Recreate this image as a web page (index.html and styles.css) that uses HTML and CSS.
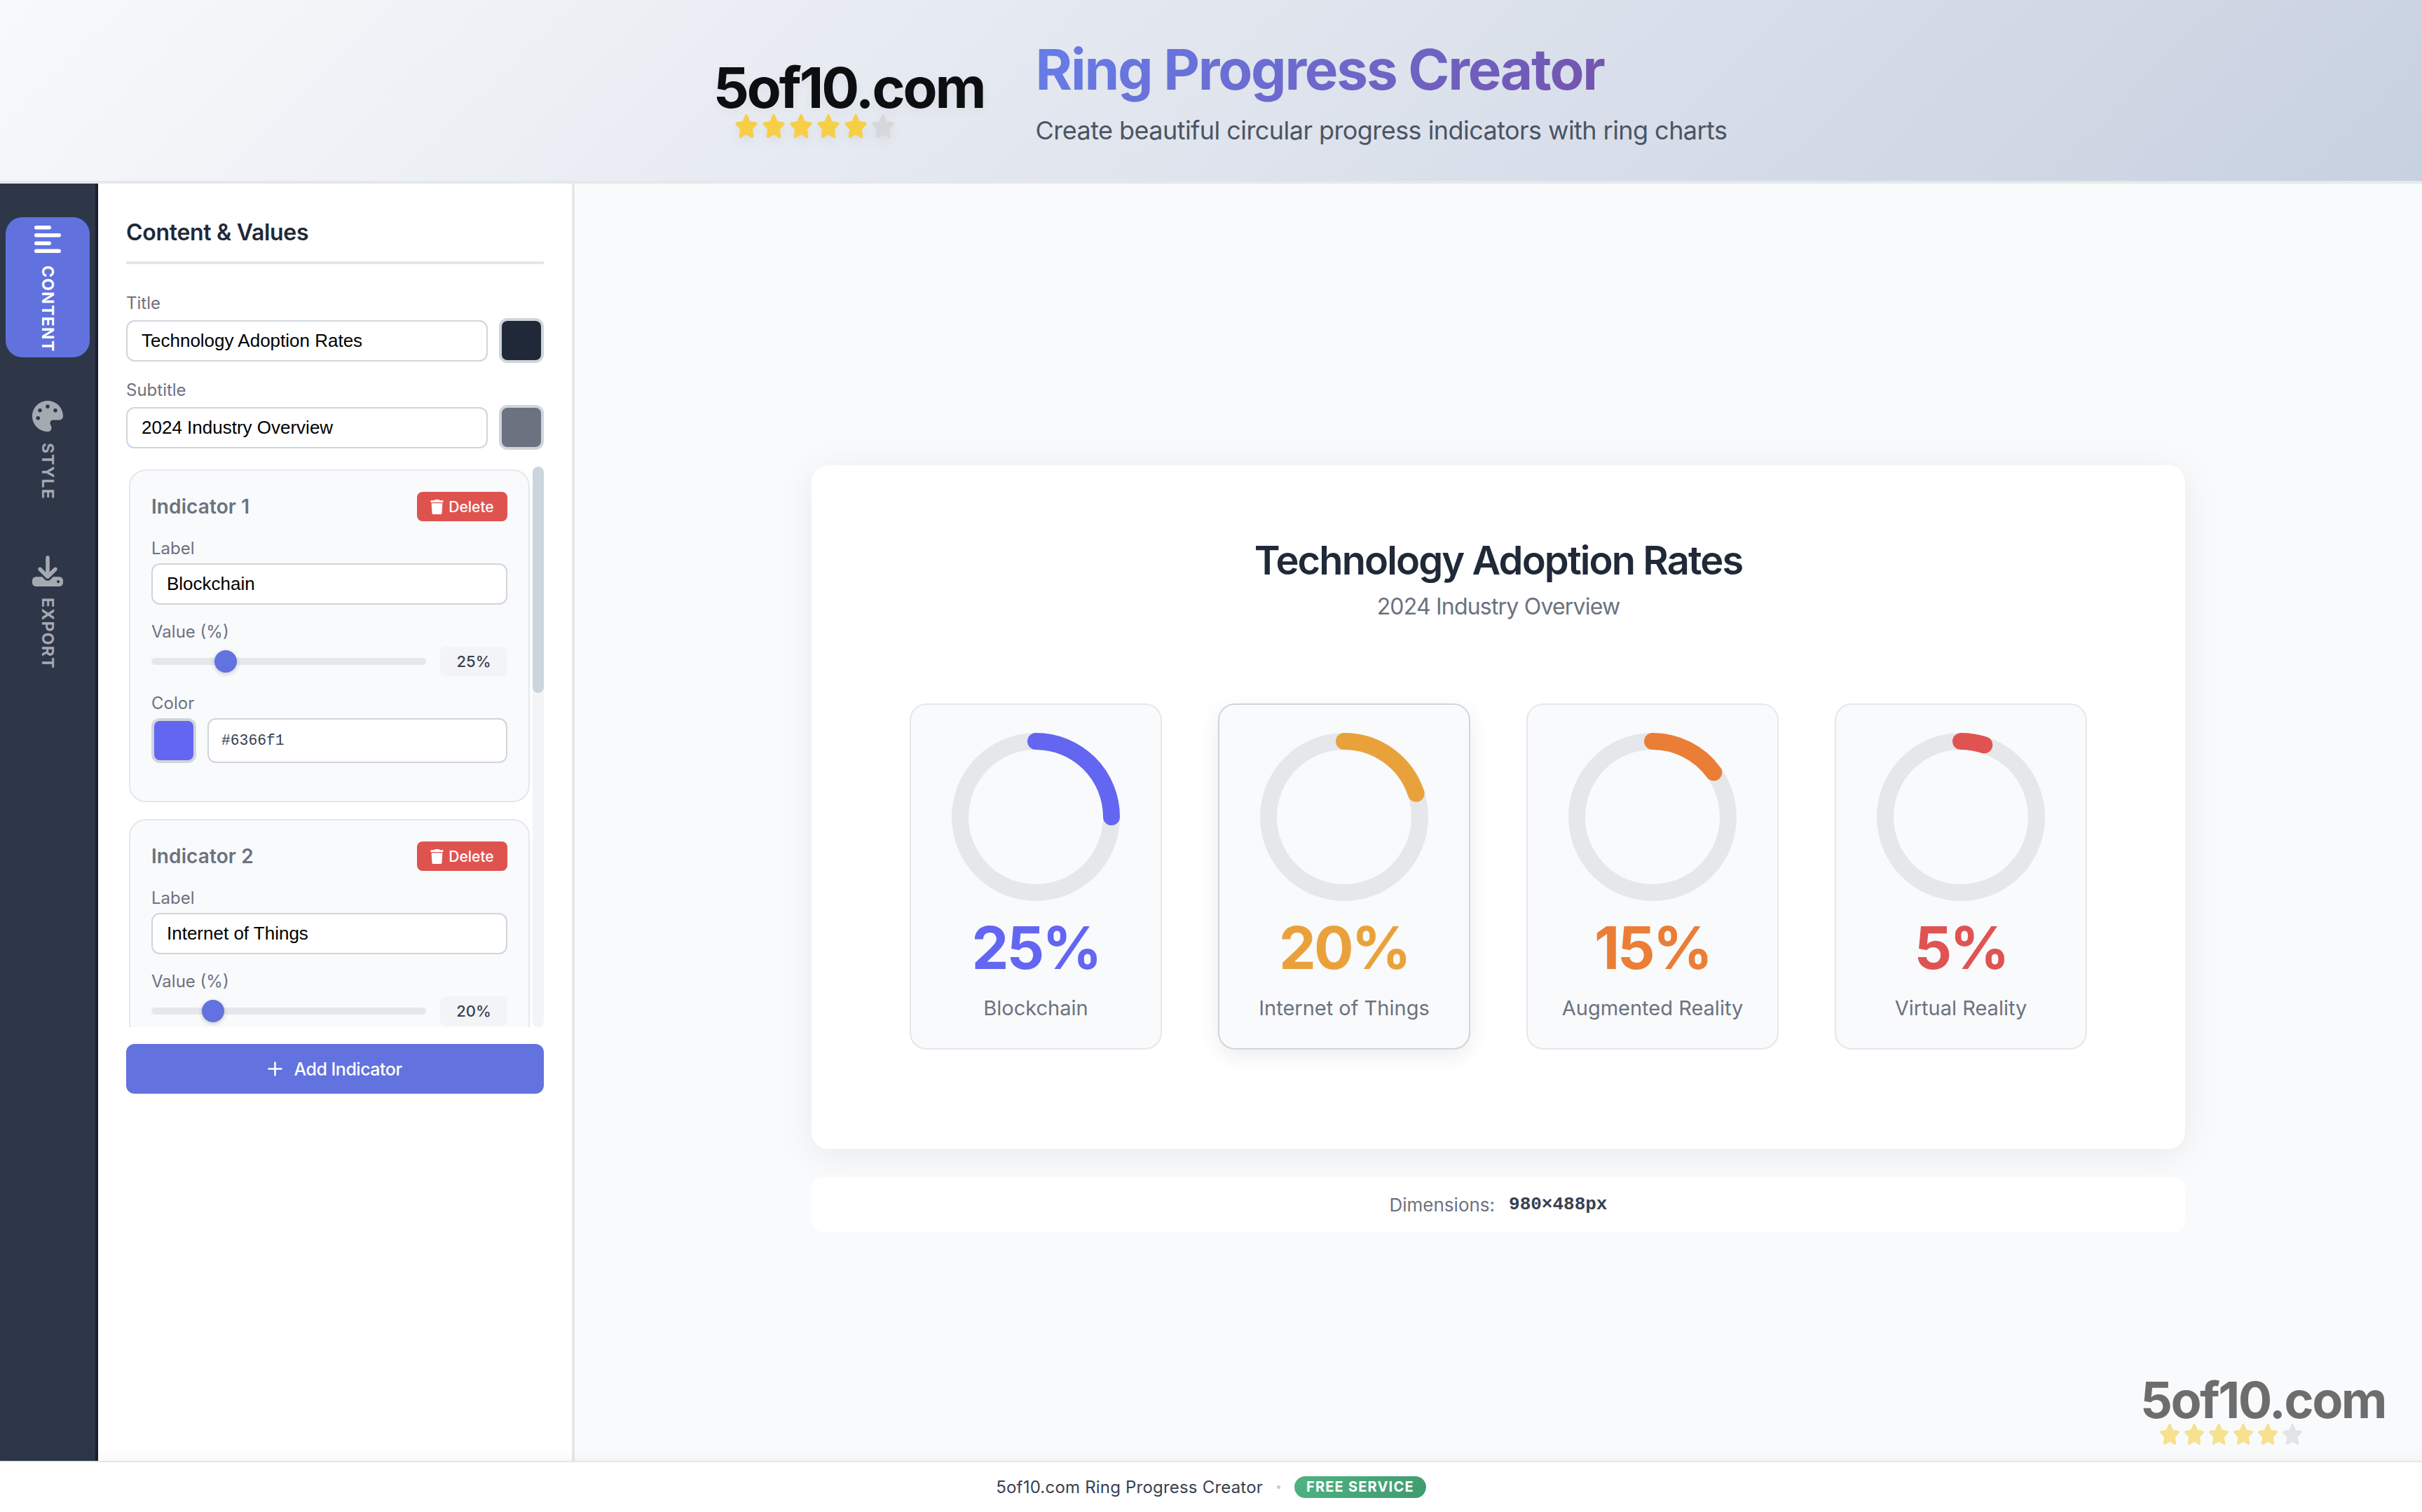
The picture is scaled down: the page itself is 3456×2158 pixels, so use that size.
FILE: index.html
```html
<!DOCTYPE html>
<html lang="en">
<head>
    <meta charset="UTF-8">
    <meta name="viewport" content="width=device-width, initial-scale=1.0">
    <title>Ring Progress Creator</title>
    <link rel="stylesheet" href="styles.css">
</head>
<body>
    <svg class="defs" width="0" height="0">
        <symbol id="star" viewBox="0 0 576 512" preserveAspectRatio="none"><path d="M316.9 18C311.6 7 300.4 0 288.1 0s-23.4 7-28.8 18L195 150.3 51.4 171.5c-12 1.8-22 10.2-25.7 21.7s-.7 24.2 7.9 32.7L137.8 329 113.2 474.7c-2 12 3 24.2 12.9 31.3s23 8 33.8 2.3l128.3-68.5 128.3 68.5c10.8 5.7 23.9 4.9 33.8-2.3s14.9-19.3 12.9-31.3L438.5 329 542.7 225.9c8.6-8.5 11.7-21.2 7.9-32.7s-13.7-19.9-25.7-21.7L381.2 150.3 316.9 18z"/></symbol>
        <symbol id="trash" viewBox="0 0 448 512"><path d="M135.2 17.7L128 32H32C14.3 32 0 46.3 0 64S14.3 96 32 96H416c17.7 0 32-14.3 32-32s-14.3-32-32-32H320l-7.2-14.3C307.4 6.8 296.3 0 284.2 0H163.8c-12.1 0-23.2 6.8-28.6 17.7zM416 128H32L53.2 467c1.6 25.3 22.6 45 47.9 45H346.9c25.3 0 46.3-19.7 47.9-45L416 128z"/></symbol>
    </svg>

    <header class="top-header">
        <div class="logo">
            <div class="logo-text">5of10.com</div>
            <div class="stars">
                <svg class="star"><use href="#star"/></svg>
                <svg class="star"><use href="#star"/></svg>
                <svg class="star"><use href="#star"/></svg>
                <svg class="star"><use href="#star"/></svg>
                <svg class="star"><use href="#star"/></svg>
                <svg class="star star-off"><use href="#star"/></svg>
            </div>
        </div>
        <div class="header-text">
            <h1>Ring Progress Creator</h1>
            <p>Create beautiful circular progress indicators with ring charts</p>
        </div>
    </header>

    <main class="app">
        <!-- Tabs -->
        <nav class="tabs">
            <a class="tab active" href="#">
                <svg class="tab-icon" viewBox="0 0 38 39" width="38" height="39" fill="#fff">
                    <rect x="0" y="0" width="24" height="5.4" rx="2.7"/>
                    <rect x="0" y="11" width="38" height="5.4" rx="2.7"/>
                    <rect x="0" y="22.5" width="24" height="5.4" rx="2.7"/>
                    <rect x="0" y="33.6" width="38" height="5.4" rx="2.7"/>
                </svg>
                <span>CONTENT</span>
            </a>
            <a class="tab" href="#">
                <svg class="tab-icon" viewBox="0 0 512 512" width="44" height="44" fill="currentColor"><path d="M512 256c0 .9 0 1.8 0 2.7c-.4 36.5-33.6 61.3-70.1 61.3H344c-26.5 0-48 21.5-48 48c0 3.4 .4 6.7 1 9.9c2.1 10.2 6.5 20 10.8 29.9c6.1 13.8 12.1 27.5 12.1 42c0 31.8-21.6 60.7-53.4 62c-3.5 .1-7 .2-10.6 .2C114.6 512 0 397.4 0 256S114.6 0 256 0S512 114.6 512 256zM128 288a32 32 0 1 0 -64 0 32 32 0 1 0 64 0zm0-96a32 32 0 1 0 0-64 32 32 0 1 0 0 64zM288 96a32 32 0 1 0 -64 0 32 32 0 1 0 64 0zm96 96a32 32 0 1 0 0-64 32 32 0 1 0 0 64z"/></svg>
                <span>STYLE</span>
            </a>
            <a class="tab" href="#">
                <svg class="tab-icon" viewBox="0 0 512 512" width="44" height="44" fill="currentColor"><path d="M288 32c0-17.7-14.3-32-32-32s-32 14.3-32 32V274.7l-73.4-73.4c-12.5-12.5-32.8-12.5-45.3 0s-12.5 32.8 0 45.3l128 128c12.5 12.5 32.8 12.5 45.3 0l128-128c12.5-12.5 12.5-32.8 0-45.3s-32.8-12.5-45.3 0L288 274.7V32zM64 352c-35.3 0-64 28.7-64 64v32c0 35.3 28.7 64 64 64H448c35.3 0 64-28.7 64-64V416c0-35.3-28.7-64-64-64H346.5l-45.3 45.3c-25 25-65.5 25-90.5 0L165.5 352H64zm368 56a24 24 0 1 1 0 48 24 24 0 1 1 0-48z"/></svg>
                <span>EXPORT</span>
            </a>
        </nav>

        <!-- Panel -->
        <section class="panel">
            <h2>Content &amp; Values</h2>

            <div class="field">
                <label class="field-label">Title</label>
                <div class="input-row">
                    <input class="text-input" type="text" value="Technology Adoption Rates">
                    <input class="swatch" type="color" value="#1f2937">
                </div>
            </div>
            <div class="field">
                <label class="field-label">Subtitle</label>
                <div class="input-row">
                    <input class="text-input" type="text" value="2024 Industry Overview">
                    <input class="swatch" type="color" value="#6b7280">
                </div>
            </div>

            <div class="indicator-wrap">
                <div class="indicator-list">
                    <div class="indicator">
                        <div class="indicator-head">
                            <span class="indicator-name">Indicator 1</span>
                            <button class="delete-btn"><svg class="trash"><use href="#trash"/></svg>Delete</button>
                        </div>
                        <div class="field">
                            <label class="field-label">Label</label>
                            <input class="text-input" type="text" value="Blockchain">
                        </div>
                        <div class="field">
                            <label class="field-label">Value (%)</label>
                            <div class="slider-row">
                                <input class="slider" type="range" min="0" max="100" value="25">
                                <span class="slider-value">25%</span>
                            </div>
                        </div>
                        <div class="field">
                            <label class="field-label">Color</label>
                            <div class="input-row">
                                <input class="swatch" type="color" value="#6366f1">
                                <input class="text-input hex-input" type="text" value="#6366f1">
                            </div>
                        </div>
                    </div>

                    <div class="indicator">
                        <div class="indicator-head">
                            <span class="indicator-name">Indicator 2</span>
                            <button class="delete-btn"><svg class="trash"><use href="#trash"/></svg>Delete</button>
                        </div>
                        <div class="field">
                            <label class="field-label">Label</label>
                            <input class="text-input" type="text" value="Internet of Things">
                        </div>
                        <div class="field">
                            <label class="field-label">Value (%)</label>
                            <div class="slider-row">
                                <input class="slider" type="range" min="0" max="100" value="20">
                                <span class="slider-value">20%</span>
                            </div>
                        </div>
                    </div>
                </div>
                <div class="scrollbar"><div class="scrollbar-thumb"></div></div>
            </div>

            <button class="add-btn">
                <svg viewBox="0 0 21 21" width="21" height="21" stroke="#fff" stroke-width="2.6" stroke-linecap="round"><path d="M10.5 1.5v18M1.5 10.5h18"/></svg>
                Add Indicator
            </button>
        </section>

        <!-- Preview -->
        <section class="canvas">
            <div class="chart-card">
                <h3 class="chart-title">Technology Adoption Rates</h3>
                <p class="chart-subtitle">2024 Industry Overview</p>
                <div class="rings">
                    <div class="ring-card">
                        <svg class="ring" viewBox="0 0 120 120">
                            <circle class="ring-bg" cx="60" cy="60" r="54"/>
                            <circle class="ring-bar" cx="60" cy="60" r="54" pathLength="100" stroke="#6366f1" stroke-dasharray="25 100"/>
                        </svg>
                        <div class="ring-num c-blue">25%</div>
                        <div class="ring-label">Blockchain</div>
                    </div>
                    <div class="ring-card hovered">
                        <svg class="ring" viewBox="0 0 120 120">
                            <circle class="ring-bg" cx="60" cy="60" r="54"/>
                            <circle class="ring-bar" cx="60" cy="60" r="54" pathLength="100" stroke="#e9a23b" stroke-dasharray="20 100"/>
                        </svg>
                        <div class="ring-num c-amber">20%</div>
                        <div class="ring-label">Internet of Things</div>
                    </div>
                    <div class="ring-card">
                        <svg class="ring" viewBox="0 0 120 120">
                            <circle class="ring-bg" cx="60" cy="60" r="54"/>
                            <circle class="ring-bar" cx="60" cy="60" r="54" pathLength="100" stroke="#ea7e36" stroke-dasharray="15 100"/>
                        </svg>
                        <div class="ring-num c-orange">15%</div>
                        <div class="ring-label">Augmented Reality</div>
                    </div>
                    <div class="ring-card">
                        <svg class="ring" viewBox="0 0 120 120">
                            <circle class="ring-bg" cx="60" cy="60" r="54"/>
                            <circle class="ring-bar" cx="60" cy="60" r="54" pathLength="100" stroke="#e05353" stroke-dasharray="5 100"/>
                        </svg>
                        <div class="ring-num c-red">5%</div>
                        <div class="ring-label">Virtual Reality</div>
                    </div>
                </div>
            </div>
            <div class="dimensions">
                <span>Dimensions:</span>
                <code>980×488px</code>
            </div>

            <div class="watermark">
                <div class="watermark-text">5of10.com</div>
                <div class="stars stars-small">
                    <svg class="star"><use href="#star"/></svg>
                    <svg class="star"><use href="#star"/></svg>
                    <svg class="star"><use href="#star"/></svg>
                    <svg class="star"><use href="#star"/></svg>
                    <svg class="star"><use href="#star"/></svg>
                    <svg class="star star-off"><use href="#star"/></svg>
                </div>
            </div>
        </section>
    </main>

    <footer class="bottom-bar">
        <span class="footer-name">5of10.com Ring Progress Creator</span>
        <i class="dot"></i>
        <span class="badge">FREE SERVICE</span>
    </footer>
</body>
</html>
```

FILE: styles.css
```css
* {
    box-sizing: border-box;
}
body {
    font-family: Inter, "Noto Sans", sans-serif;
    margin: 0;
    height: 100vh;
    display: flex;
    flex-direction: column;
    overflow: hidden;
    background-color: #f9fafb;
}
.defs {
    position: absolute;
}

/* Header */
.top-header {
    height: 262px;
    flex: none;
    padding-left: 26px;
    display: flex;
    justify-content: center;
    align-items: center;
    gap: 73px;
    background: linear-gradient(135deg, #f8f9fb 0%, #c8d1e1 100%);
    border-bottom: 4px solid #e5e7eb;
}
.logo {
    margin-top: 24px;
}
.logo-text {
    font-size: 80px;
    font-weight: 700;
    line-height: 80px;
    letter-spacing: -3px;
    color: #0c0e10;
    text-shadow: 0 6px 16px rgba(0, 0, 0, 0.05);
}
.stars {
    display: flex;
    gap: 5px;
    margin: -2px 0 0 30px;
    filter: drop-shadow(0 6px 8px rgba(0, 0, 0, 0.06));
}
.star {
    width: 34px;
    height: 34px;
    fill: #f6cf47;
}
.star-off {
    fill: #d6d7da;
}
.header-text {
    margin-top: -1px;
}
.header-text h1 {
    margin: 0;
    font-size: 80px;
    font-weight: 700;
    line-height: 97px;
    letter-spacing: -2.2px;
    background: linear-gradient(135deg, #667eea, #764ba2);
    -webkit-background-clip: text;
    background-clip: text;
    color: transparent;
}
.header-text p {
    margin: 17px 0 0;
    font-size: 36px;
    line-height: 44px;
    letter-spacing: -0.56px;
    color: #4b5563;
}

/* Layout */
.app {
    flex: 1;
    display: flex;
    min-height: 0;
}
.tabs {
    width: 140px;
    flex: none;
    background-color: #2d3748;
    border-right: 4px solid #1a202c;
    padding: 48px 8px 0;
    display: flex;
    flex-direction: column;
    gap: 62px;
}
.tab {
    height: 159px;
    color: #a5a9b2;
    text-decoration: none;
    display: flex;
    flex-direction: column;
    align-items: center;
    gap: 16px;
    font-size: 23px;
    font-weight: 700;
    letter-spacing: 1.3px;
}
.tab span {
    writing-mode: vertical-rl;
    line-height: 24px;
}
.tab.active {
    background-color: #6172df;
    color: #fff;
    border-radius: 24px;
    padding: 12px 0;
    height: 200px;
    gap: 18px;
}
.tab-icon {
    flex: none;
}

/* Panel */
.panel {
    width: 680px;
    flex: none;
    background-color: #fff;
    border-right: 4px solid #e5e7eb;
    padding: 50px 40px 0;
}
.panel h2 {
    margin: 0 0 41px;
    padding-bottom: 22px;
    font-size: 32px;
    font-weight: 600;
    line-height: 39px;
    letter-spacing: -0.3px;
    color: #1f2937;
    border-bottom: 4px solid #e5e7eb;
}
.field {
    margin-bottom: 24px;
}
.field-label {
    display: block;
    margin-bottom: 7px;
    font-size: 24px;
    line-height: 29px;
    color: #6b7280;
}
.input-row {
    display: flex;
    align-items: center;
    gap: 16px;
}
.text-input {
    width: 100%;
    min-width: 0;
    height: 59px;
    padding: 0 20px;
    border: 2px solid #d1d5db;
    border-radius: 12px;
    background-color: #fff;
    font-family: "Liberation Sans", Arial, sans-serif;
    font-size: 26px;
    color: #000;
}
.hex-input {
    height: 64px;
    padding: 0 18px;
    font-family: "Liberation Mono", monospace;
    font-size: 21.33px;
    color: #374151;
}
.swatch {
    width: 64px;
    height: 64px;
    flex: none;
    padding: 0;
    border: 4px solid #d1d5db;
    border-radius: 12px;
    background-color: #d1d5db;
    -webkit-appearance: none;
    appearance: none;
}
.swatch::-webkit-color-swatch-wrapper {
    padding: 0;
}
.swatch::-webkit-color-swatch {
    border: none;
    border-radius: 6px;
}

/* Indicators */
.indicator-wrap {
    height: 800px;
    display: flex;
    gap: 4px;
    padding-left: 4px;
    margin-bottom: 24px;
}
.indicator-list {
    flex: 1;
    min-width: 0;
    overflow: hidden;
    padding-top: 4px;
}
.scrollbar {
    width: 16px;
    flex: none;
    border-radius: 8px;
    background-color: #f3f4f6;
}
.scrollbar-thumb {
    height: 323px;
    border-radius: 8px;
    background-color: #cbd5e0;
}
.indicator {
    margin-bottom: 24px;
    padding: 30px;
    border: 2px solid #e5e7eb;
    border-radius: 24px;
    background-color: #f9fafb;
}
.indicator-head {
    display: flex;
    justify-content: space-between;
    align-items: center;
    margin-bottom: 24px;
}
.indicator-name {
    font-size: 28px;
    font-weight: 600;
    letter-spacing: 0.1px;
    color: #6b7280;
}
.delete-btn {
    height: 42px;
    width: 129px;
    display: flex;
    align-items: center;
    justify-content: center;
    gap: 7px;
    border: none;
    border-radius: 8px;
    background-color: #df534f;
    color: #fff;
    font-family: Inter, sans-serif;
    font-size: 21px;
    font-weight: 500;
}
.trash {
    width: 19px;
    height: 21px;
    fill: #fff;
}
.slider-row {
    display: flex;
    align-items: center;
    gap: 20px;
}
.slider {
    flex: 1;
    min-width: 0;
    height: 42px;
    margin: 0;
    background: transparent;
    -webkit-appearance: none;
    appearance: none;
}
.slider::-webkit-slider-runnable-track {
    height: 10px;
    border-radius: 5px;
    background-color: #e5e7eb;
}
.slider::-webkit-slider-thumb {
    -webkit-appearance: none;
    width: 32px;
    height: 32px;
    margin-top: -11px;
    border-radius: 50%;
    background-color: #6272de;
    box-shadow: 0 2px 6px rgba(0, 0, 0, 0.2);
}
.slider-value {
    width: 96px;
    height: 42px;
    flex: none;
    text-align: center;
    line-height: 42px;
    border-radius: 8px;
    background-color: #f3f4f6;
    font-size: 22px;
    font-weight: 500;
    color: #374151;
}
.add-btn {
    width: 100%;
    height: 71px;
    display: flex;
    align-items: center;
    justify-content: center;
    gap: 16px;
    border: none;
    border-radius: 12px;
    background-color: #6272de;
    color: #fff;
    font-family: Inter, sans-serif;
    font-size: 25px;
    font-weight: 500;
    letter-spacing: -0.5px;
}

/* Preview */
.canvas {
    flex: 1;
    position: relative;
    padding-top: 402px;
    background-color: #f9fafb;
}
.chart-card {
    width: 1960px;
    height: 976px;
    margin: 0 auto;
    padding-top: 102px;
    background-color: #fff;
    border-radius: 24px;
    box-shadow: 0 8px 50px rgba(0, 0, 0, 0.07);
    text-align: center;
}
.chart-title {
    margin: 0;
    font-size: 56px;
    font-weight: 600;
    line-height: 68px;
    letter-spacing: -1.9px;
    color: #1f2937;
}
.chart-subtitle {
    margin: 12px 0 119px;
    font-size: 32px;
    line-height: 39px;
    letter-spacing: -0.8px;
    color: #6b7280;
}
.rings {
    display: flex;
    justify-content: center;
    gap: 80px;
}
.ring-card {
    width: 360px;
    height: 494px;
    padding-top: 40px;
    border: 2px solid #e5e7eb;
    border-radius: 24px;
    background-color: #f9fafb;
}
.ring-card.hovered {
    border-color: #d1d5db;
    box-shadow: 0 8px 30px rgba(0, 0, 0, 0.08);
}
.ring {
    display: block;
    width: 240px;
    height: 240px;
    margin: 0 auto;
    transform: rotate(-90deg);
}
.ring-bg, .ring-bar {
    fill: none;
    stroke-width: 12;
}
.ring-bg {
    stroke: #e5e7eb;
}
.ring-bar {
    stroke-linecap: round;
}
.ring-num {
    margin-top: 18px;
    font-size: 84px;
    font-weight: 700;
    line-height: 97px;
    letter-spacing: -3px;
}
.c-blue { color: #6366f1; }
.c-amber { color: #e9a23b; }
.c-orange { color: #ea7e36; }
.c-red { color: #e05353; }
.ring-label {
    margin-top: 21px;
    font-size: 29px;
    line-height: 34px;
    color: #6b7280;
}
.dimensions {
    width: 1960px;
    height: 78px;
    margin: 40px auto 0;
    display: flex;
    justify-content: center;
    align-items: center;
    gap: 20px;
    background-color: #fff;
    border-radius: 16px;
    font-size: 26px;
    color: #6b7280;
}
.dimensions code {
    font-family: "Liberation Mono", monospace;
    font-weight: 700;
    font-size: 26px;
    color: #374151;
}
.watermark {
    position: absolute;
    right: 52px;
    top: 1700px;
    opacity: 0.6;
}
.watermark-text {
    font-size: 72px;
    font-weight: 700;
    line-height: 72px;
    letter-spacing: -2.5px;
    color: #111;
}
.stars-small {
    gap: 5px;
    margin: -2px 0 0 27px;
    filter: none;
}
.stars-small .star {
    width: 30px;
    height: 30px;
}

/* Footer */
.bottom-bar {
    height: 73px;
    flex: none;
    display: flex;
    justify-content: center;
    align-items: center;
    gap: 20px;
    background-color: #fff;
    border-top: 2px solid #e5e7eb;
    box-shadow: 0 -4px 16px rgba(0, 0, 0, 0.04);
    font-size: 24px;
    font-weight: 400;
    color: #374151;
    position: relative;
}
.footer-name {
    letter-spacing: 0.2px;
}
.dot {
    width: 5px;
    height: 5px;
    border-radius: 50%;
    background-color: #c5c9d0;
}
.badge {
    height: 31px;
    padding: 0 17px;
    line-height: 31px;
    border-radius: 16px;
    background: linear-gradient(135deg, #4fb382, #3f9a70);
    color: #fff;
    font-size: 20px;
    font-weight: 700;
    letter-spacing: 1.2px;
}
```
